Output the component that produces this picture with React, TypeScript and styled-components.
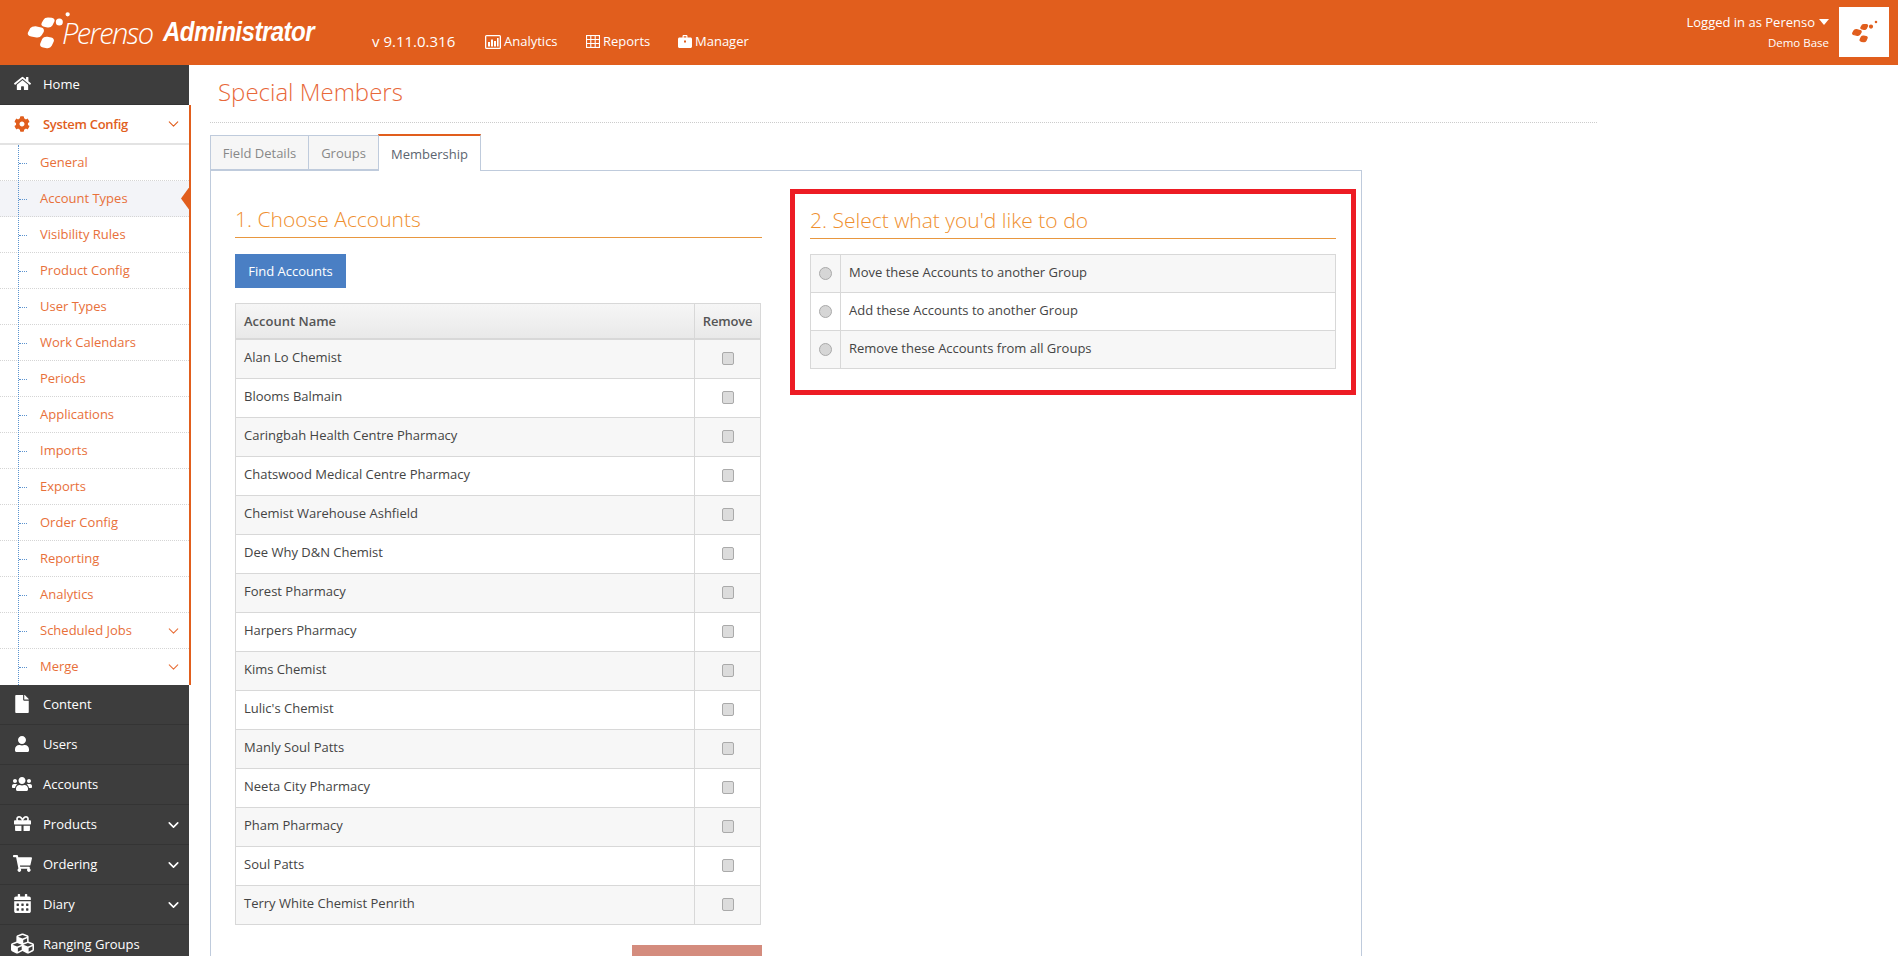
import React from 'react'
import styled, { createGlobalStyle } from 'styled-components'
import { FaHome, FaCog, FaFile, FaUser, FaUsers, FaGift, FaShoppingCart, FaCalendarAlt, FaCubes } from 'react-icons/fa'
import { ChevronDown } from 'lucide-react'

const GlobalStyle = createGlobalStyle`
  html, body { margin: 0; padding: 0; height: 956px; overflow: hidden; background: #fff; }
  body { font-family: "Open Sans", "Liberation Sans", sans-serif; font-size: 13px; color: #444; }
  * { box-sizing: border-box; }
`

const Page = styled.div`
  width: 1898px;
  height: 956px;
  overflow: hidden;
  display: flex;
  flex-direction: column;
`

const TopBar = styled.header`
  height: 65px;
  flex: none;
  background: #e15e1d;
  color: #fff;
  display: flex;
  align-items: flex-start;
`

const Brand = styled.div`
  width: 372px;
  flex: none;
  padding: 7px 0 0 26px;
  display: flex;
  align-items: center;
  height: 54px;
  white-space: nowrap;
`

const BrandLight = styled.span`
  font-size: 29px;
  font-weight: 300;
  font-style: italic;
  letter-spacing: -1.5px;
  margin: 3px 0 0 -9px;
`

const BrandBold = styled.span`
  display: inline-block;
  font-size: 28px;
  font-weight: 700;
  font-style: italic;
  letter-spacing: -0.6px;
  margin: 3px 0 0 10px;
  font-family: "Liberation Sans", sans-serif;
  transform: scaleX(0.86);
  transform-origin: left center;
`

const Version = styled.span`
  font-size: 15px;
  width: 113px;
  margin-top: 32px;
  line-height: 19px;
`

const TopLink = styled.a<{ $w: number }>`
  width: ${p => p.$w}px;
  margin-top: 32px;
  line-height: 19px;
  font-size: 13px;
  display: flex;
  align-items: center;
  gap: 3px;
`

const UserBox = styled.div`
  margin-left: auto;
  padding: 13px 10px 0 0;
  text-align: right;
`

const UserName = styled.div`
  font-size: 13px;
  line-height: 18px;
  display: flex;
  align-items: center;
  justify-content: flex-end;
  gap: 4px;
`

const UserCaret = styled.span`
  width: 0;
  height: 0;
  border-left: 5px solid transparent;
  border-right: 5px solid transparent;
  border-top: 6px solid #fff;
`

const UserBase = styled.div`
  font-size: 11.5px;
  line-height: 15px;
  margin-top: 4px;
`

const LogoTile = styled.div`
  width: 50px;
  height: 50px;
  margin: 7px 9px 0 0;
  background: #fff;
  display: flex;
  align-items: center;
  justify-content: center;
`

const Body = styled.div`
  flex: 1;
  display: flex;
  min-height: 0;
`

const Side = styled.nav`
  width: 191px;
  flex: none;
  overflow: hidden;
`

const DarkRow = styled.div`
  width: 189px;
  height: 40px;
  background: #3d3d3d;
  border-bottom: 1px solid #343434;
  color: #fff;
  display: flex;
  align-items: center;
  position: relative;
  padding: 0 0 2px 43px;
  font-size: 13px;
`

const RowIcon = styled.span<{ $size: number }>`
  position: absolute;
  left: 9px;
  width: 26px;
  display: flex;
  justify-content: center;
  font-size: ${p => p.$size}px;
`

const RowCaret = styled.span`
  position: absolute;
  right: 7px;
  top: 50%;
  transform: translateY(-50%);
  display: flex;
`

const OpenGroup = styled.div`
  background: #fff;
  border-right: 2px solid #e15e1d;
  position: relative;
`

const GroupHead = styled.div`
  height: 40px;
  border-bottom: 2px solid #e3e3e3;
  color: #e15e1d;
  font-weight: 600;
  letter-spacing: -0.3px;
  display: flex;
  align-items: center;
  position: relative;
  padding: 0 0 0 43px;
`

const TreeList = styled.div`
  position: relative;
  &::after {
    content: '';
    position: absolute;
    left: 18px;
    top: 0;
    bottom: 0;
    border-left: 1px dotted #5b93cf;
  }
`

const TreeRow = styled.div<{ $active?: boolean }>`
  height: 36px;
  padding: 0 0 2px 40px;
  display: flex;
  align-items: center;
  position: relative;
  color: #e8703a;
  background: ${p => (p.$active ? '#f3f4f8' : '#fff')};
  border-bottom: 1px dotted #d5d5d5;
  &:last-child { border-bottom: 0; }
  &::before {
    content: '';
    position: absolute;
    left: 19px;
    top: 50%;
    width: 8px;
    border-top: 1px dotted #5b93cf;
  }
`

const ActiveArrow = styled.span`
  position: absolute;
  right: 0;
  top: 50%;
  transform: translateY(-50%);
  width: 8px;
  height: 22px;
  background: #e15e1d;
  clip-path: polygon(100% 0, 100% 100%, 0 50%);
`

const Main = styled.main`
  flex: 1;
  padding: 0 0 0 19px;
  min-width: 0;
`

const PageTitle = styled.h1`
  width: 1387px;
  height: 58px;
  margin: 0;
  padding: 10px 0 0 8px;
  font-size: 24px;
  line-height: 33px;
  font-weight: 300;
  color: #e8683a;
  border-bottom: 1px dotted #ccc;
`

const Tabs = styled.div`
  display: flex;
  margin-top: 13px;
  width: 1152px;
  height: 35px;
  border-bottom: 1px solid #bfcbdc;
  align-items: flex-end;
`

const Tab = styled.div<{ $active?: boolean; $w: number }>`
  width: ${p => p.$w}px;
  height: ${p => (p.$active ? 37 : 35)}px;
  margin-bottom: ${p => (p.$active ? -1 : 0)}px;
  display: flex;
  align-items: center;
  justify-content: center;
  border: 1px solid #bfcbdc;
  border-right-width: ${p => (p.$active ? 1 : 0)}px;
  border-top: ${p => (p.$active ? '2px solid #e15e1d' : '1px solid #bfcbdc')};
  border-bottom: ${p => (p.$active ? '0' : '1px solid #bfcbdc')};
  background: ${p => (p.$active ? '#fff' : '#f6f6f6')};
  color: ${p => (p.$active ? '#5c6570' : '#888')};
  font-size: 13px;
`

const Panel = styled.section`
  width: 1152px;
  height: 800px;
  border: 1px solid #bfcbdc;
  border-top: 0;
  padding: 0 24px;
  display: flex;
  align-items: flex-start;
`

const LeftCol = styled.div`
  width: 527px;
  flex: none;
  padding-top: 30px;
`

const Callout = styled.div`
  width: 566px;
  height: 206px;
  margin: 18px 0 0 28px;
  border: 5px solid #ed1c24;
  padding: 8px 15px 0 15px;
  flex: none;
`

const SectionTitle = styled.h2`
  margin: 0;
  height: 37px;
  font-size: 21px;
  line-height: 28px;
  padding-top: 4px;
  font-weight: 300;
  color: #ef8f2f;
  border-bottom: 1px solid #e8973f;
`

const FindButton = styled.button`
  display: block;
  width: 111px;
  height: 34px;
  margin: 16px 0 15px;
  border: 0;
  background: #4a7fc4;
  color: #fff;
  font: 13px "Open Sans", sans-serif;
`

const Grid = styled.div`
  border: 1px solid #d8d8d8;
  border-bottom-width: 0;
  width: 526px;
`

const HeadRow = styled.div`
  display: grid;
  grid-template-columns: 458px 1fr;
  height: 36px;
  border-bottom: 2px solid #d8d8d8;
  background: linear-gradient(#f6f6f6, #e9e9e9);
  color: #555;
  font-weight: 600;
`

const NameCell = styled.div`
  display: flex;
  align-items: center;
  padding: 0 0 4px 8px;
`

const HeadName = styled(NameCell)`
  padding-bottom: 0;
`

const CheckCell = styled.div`
  display: flex;
  align-items: center;
  justify-content: center;
  padding-bottom: 1px;
  border-left: 1px solid #d8d8d8;
`

const HeadRemove = styled(CheckCell)`
  padding-bottom: 0;
  letter-spacing: -0.2px;
`

const AccountRow = styled.div`
  display: grid;
  grid-template-columns: 458px 1fr;
  height: 39px;
  border-bottom: 1px solid #d8d8d8;
  &:nth-child(even) { background: #f7f7f7; }
`

const Check = styled.span`
  width: 12px;
  height: 13px;
  background: #dcdcdc;
  border: 1px solid #aaa;
  border-radius: 2px;
`

const BottomButton = styled.div`
  width: 130px;
  height: 40px;
  margin: 20px 0 0 397px;
  background: #d48c7e;
`

const ActionTable = styled.div`
  margin-top: 15px;
  width: 526px;
  border: 1px solid #d8d8d8;
  border-bottom-width: 0;
`

const ActionRow = styled.div`
  display: grid;
  grid-template-columns: 30px 1fr;
  height: 38px;
  border-bottom: 1px solid #d8d8d8;
  &:nth-child(odd) { background: #f7f7f7; }
`

const RadioCell = styled.div`
  display: flex;
  align-items: center;
  justify-content: center;
  border-right: 1px solid #d8d8d8;
`

const Radio = styled.span`
  width: 13px;
  height: 13px;
  border-radius: 50%;
  background: #d6d6d6;
  border: 1px solid #aaa;
`

const ActionText = styled.div`
  display: flex;
  align-items: center;
  padding: 0 0 3px 8px;
`

const items = ['General', 'Account Types', 'Visibility Rules', 'Product Config', 'User Types', 'Work Calendars', 'Periods', 'Applications', 'Imports', 'Exports', 'Order Config', 'Reporting', 'Analytics', 'Scheduled Jobs', 'Merge']
const accounts = ['Alan Lo Chemist', 'Blooms Balmain', 'Caringbah Health Centre Pharmacy', 'Chatswood Medical Centre Pharmacy', 'Chemist Warehouse Ashfield', 'Dee Why D&N Chemist', 'Forest Pharmacy', 'Harpers Pharmacy', 'Kims Chemist', "Lulic's Chemist", 'Manly Soul Patts', 'Neeta City Pharmacy', 'Pham Pharmacy', 'Soul Patts', 'Terry White Chemist Penrith']
const actions = ['Move these Accounts to another Group', 'Add these Accounts to another Group', 'Remove these Accounts from all Groups']

const dark = [
  { label: 'Content', size: 18, icon: <FaFile /> },
  { label: 'Users', size: 16, icon: <FaUser /> },
  { label: 'Accounts', size: 20, icon: <FaUsers /> },
  { label: 'Products', size: 17, icon: <FaGift />, more: true },
  { label: 'Ordering', size: 19, icon: <FaShoppingCart />, more: true },
  { label: 'Diary', size: 19, icon: <FaCalendarAlt />, more: true },
  { label: 'Ranging Groups', size: 23, icon: <FaCubes /> },
]

// blobs get a same-colour stroke so the corners come out soft like the real logo
function Mark({ width, color }: { width: number; color: string }) {
  return (
    <svg width={width} height={(width * 118) / 135} viewBox="30 15 135 118" fill={color} stroke={color} strokeWidth="7" strokeLinejoin="round">
      <path d="M86 42 Q88 38 96 38 L107 39 Q114 40 112 45 L106 57 Q103 62 95 61 L85 59 Q78 57 80 53 Z" />
      <path d="M46 68 Q49 64 58 64 L75 68 Q82 70 80 76 L74 86 Q70 92 62 91 L46 88 Q37 86 39 81 Z" />
      <path d="M82 100 Q85 95 94 96 L105 98 Q112 100 110 105 L104 118 Q101 124 93 123 L82 121 Q74 119 76 114 Z" />
      <circle cx="130" cy="48" r="7" />
      <circle cx="155" cy="25" r="3" />
    </svg>
  )
}

function AnalyticsIcon() {
  return (
    <svg width="16" height="14" viewBox="0 0 16 14" fill="#fff">
      <path fillRule="evenodd" d="M0 1.5A1.5 1.5 0 0 1 1.5 0h13A1.5 1.5 0 0 1 16 1.5v11a1.5 1.5 0 0 1-1.5 1.5h-13A1.5 1.5 0 0 1 0 12.5zM1.3 1.3v11.4h13.4V1.3z" />
      <rect x="3" y="7" width="2" height="4.5" />
      <rect x="6" y="4.5" width="2" height="7" />
      <rect x="9" y="6" width="2" height="5.5" />
      <rect x="12" y="3" width="1.6" height="8.5" />
    </svg>
  )
}

function ReportsIcon() {
  return (
    <svg width="14" height="13" viewBox="0 0 14 13" fill="none" stroke="#fff" strokeWidth="1.1">
      <rect x="0.55" y="0.55" width="12.9" height="11.9" />
      <path d="M0.5 4.5h13M0.5 8.5h13M4.8 0.5v12M9.2 0.5v12" />
    </svg>
  )
}

function ManagerIcon() {
  return (
    <svg width="14" height="13" viewBox="0 0 14 13" fill="#fff">
      <path fillRule="evenodd" d="M4.5 2.5V1.2C4.5.5 5 0 5.7 0h2.6c.7 0 1.2.5 1.2 1.2v1.3h3c.8 0 1.5.7 1.5 1.5v7.5c0 .8-.7 1.5-1.500 1.500h-11C.7 13 0 12.300 0 11.500V4c0-.8.7-1.500 1.500-1.500zM5.700 1.200v1.300h2.600V1.200zM6 5.500v2h2v-2z" />
    </svg>
  )
}

export default function App() {
  return (
    <Page>
      <GlobalStyle />
      <TopBar>
        <Brand>
          <Mark width={45} color="#fff" />
          <BrandLight>Perenso</BrandLight>
          <BrandBold>Administrator</BrandBold>
        </Brand>
        <Version>v 9.11.0.316</Version>
        <TopLink $w={101}><AnalyticsIcon />Analytics</TopLink>
        <TopLink $w={92}><ReportsIcon />Reports</TopLink>
        <TopLink $w={90}><ManagerIcon />Manager</TopLink>
        <UserBox>
          <UserName>Logged in as Perenso <UserCaret /></UserName>
          <UserBase>Demo Base</UserBase>
        </UserBox>
        <LogoTile><Mark width={27} color="#e15e1d" /></LogoTile>
      </TopBar>
      <Body>
        <Side>
          <DarkRow><RowIcon $size={17}><FaHome /></RowIcon>Home</DarkRow>
          <OpenGroup>
            <GroupHead><RowIcon $size={16}><FaCog /></RowIcon>System Config<RowCaret><ChevronDown size={17} strokeWidth={1.5} /></RowCaret></GroupHead>
            <TreeList>
              {items.map(item => (
                <TreeRow key={item} $active={item === 'Account Types'}>
                  {item}
                  {item === 'Account Types' && <ActiveArrow />}
                  {(item === 'Scheduled Jobs' || item === 'Merge') && <RowCaret><ChevronDown size={17} strokeWidth={1.5} /></RowCaret>}
                </TreeRow>
              ))}
            </TreeList>
          </OpenGroup>
          {dark.map(d => (
            <DarkRow key={d.label}>
              <RowIcon $size={d.size}>{d.icon}</RowIcon>
              {d.label}
              {d.more && <RowCaret><ChevronDown size={17} strokeWidth={2.25} /></RowCaret>}
            </DarkRow>
          ))}
        </Side>
        <Main>
          <PageTitle>Special Members</PageTitle>
          <Tabs>
            <Tab $w={98}>Field Details</Tab>
            <Tab $w={70}>Groups</Tab>
            <Tab $w={103} $active>Membership</Tab>
          </Tabs>
          <Panel>
            <LeftCol>
              <SectionTitle>1. Choose Accounts</SectionTitle>
              <FindButton>Find Accounts</FindButton>
              <Grid>
                <HeadRow>
                  <HeadName>Account Name</HeadName>
                  <HeadRemove>Remove</HeadRemove>
                </HeadRow>
                {accounts.map(a => (
                  <AccountRow key={a}>
                    <NameCell>{a}</NameCell>
                    <CheckCell><Check /></CheckCell>
                  </AccountRow>
                ))}
              </Grid>
              <BottomButton />
            </LeftCol>
            <Callout>
              <SectionTitle>2. Select what you'd like to do</SectionTitle>
              <ActionTable>
                {actions.map(a => (
                  <ActionRow key={a}>
                    <RadioCell><Radio /></RadioCell>
                    <ActionText>{a}</ActionText>
                  </ActionRow>
                ))}
              </ActionTable>
            </Callout>
          </Panel>
        </Main>
      </Body>
    </Page>
  )
}
